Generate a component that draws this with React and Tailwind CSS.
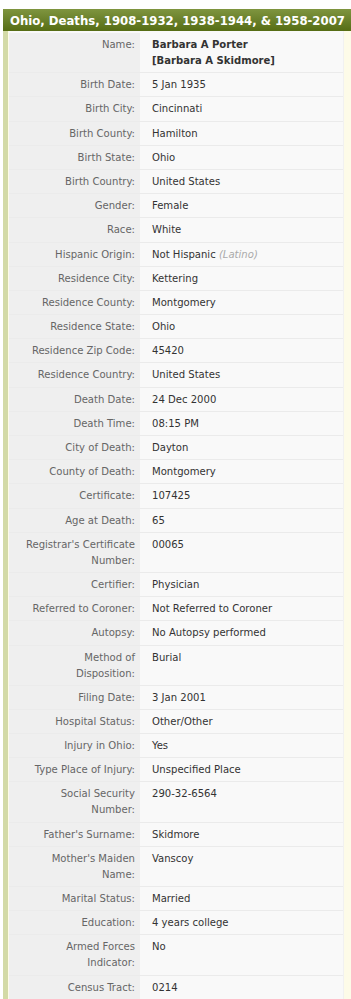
import React from "react";

// record rows: [label, value]
const rows = [
  ["Name:", "Barbara A Porter [Barbara A Skidmore]", "name"],
  ["Birth Date:", "5 Jan 1935"],
  ["Birth City:", "Cincinnati"],
  ["Birth County:", "Hamilton"],
  ["Birth State:", "Ohio"],
  ["Birth Country:", "United States"],
  ["Gender:", "Female"],
  ["Race:", "White"],
  ["Hispanic Origin:", "Not Hispanic", "latino"],
  ["Residence City:", "Kettering"],
  ["Residence County:", "Montgomery"],
  ["Residence State:", "Ohio"],
  ["Residence Zip Code:", "45420"],
  ["Residence Country:", "United States"],
  ["Death Date:", "24 Dec 2000"],
  ["Death Time:", "08:15 PM"],
  ["City of Death:", "Dayton"],
  ["County of Death:", "Montgomery"],
  ["Certificate:", "107425"],
  ["Age at Death:", "65"],
  ["Registrar's Certificate Number:", "00065"],
  ["Certifier:", "Physician"],
  ["Referred to Coroner:", "Not Referred to Coroner"],
  ["Autopsy:", "No Autopsy performed"],
  ["Method of Disposition:", "Burial"],
  ["Filing Date:", "3 Jan 2001"],
  ["Hospital Status:", "Other/Other"],
  ["Injury in Ohio:", "Yes"],
  ["Type Place of Injury:", "Unspecified Place"],
  ["Social Security Number:", "290-32-6564"],
  ["Father's Surname:", "Skidmore"],
  ["Mother's Maiden Name:", "Vanscoy"],
  ["Marital Status:", "Married"],
  ["Education:", "4 years college"],
  ["Armed Forces Indicator:", "No"],
  ["Census Tract:", "0214"],
];

function App() {
  return (
    <div
      className="w-[351px] h-[999px] overflow-hidden bg-white flex flex-col pt-[9px]"
      style={{ fontFamily: '"DejaVu Sans Condensed", "DejaVu Sans", sans-serif' }}
    >
      {/* title bar */}
      <div className="ml-[3px] h-[22px] shrink-0 bg-gradient-to-b from-[#7f953f] to-[#566d14] flex items-center pl-[7px] whitespace-nowrap">
        <span className="text-white font-bold text-[13px] leading-none">
          Ohio, Deaths, 1908-1932, 1938-1944, &amp; 1958-2007
        </span>
      </div>
      {/* record table */}
      <div className="ml-[3px] flex-1 flex bg-[#fdfbe8] border-l-[5px] border-[#d3daa6]">
        <div className="flex-1 flex flex-col">
          <div className="ml-[1px] mr-[7px] pt-[2px] bg-[#f9f9f9] border-r border-[#f1f1f1] flex flex-col">
            {rows.map((r, i) => (
              <div key={i} className="flex border-b border-[#ebebeb] text-[11.2px] leading-[16px]">
                <div className="w-[131px] shrink-0 bg-[#efefef] text-right text-[#666] pl-[16px] pr-[5px] pt-[4px] pb-[3.2px]">
                  {r[0]}
                </div>
                <div className="flex-1 bg-[#f9f9f9] text-[#333] pl-[12px] pr-[4px] pt-[4px] pb-[3.2px]">
                  {r[2] === "name" ? (
                    <span className="font-bold">
                      Barbara A Porter
                      <br />
                      [Barbara A Skidmore]
                    </span>
                  ) : r[2] === "latino" ? (
                    <span>
                      {r[1]} <i className="text-[#aaa]">(Latino)</i>
                    </span>
                  ) : (
                    r[1]
                  )}
                </div>
              </div>
            ))}
          </div>
          <div className="flex-1 bg-[#f9f9f9] ml-[1px] mr-[7px]" />
        </div>
      </div>
      <div className="h-[4px] shrink-0 border-t border-[#8a8a8a] bg-[#f0f0f0]" />
    </div>
  );
}

export default App;
